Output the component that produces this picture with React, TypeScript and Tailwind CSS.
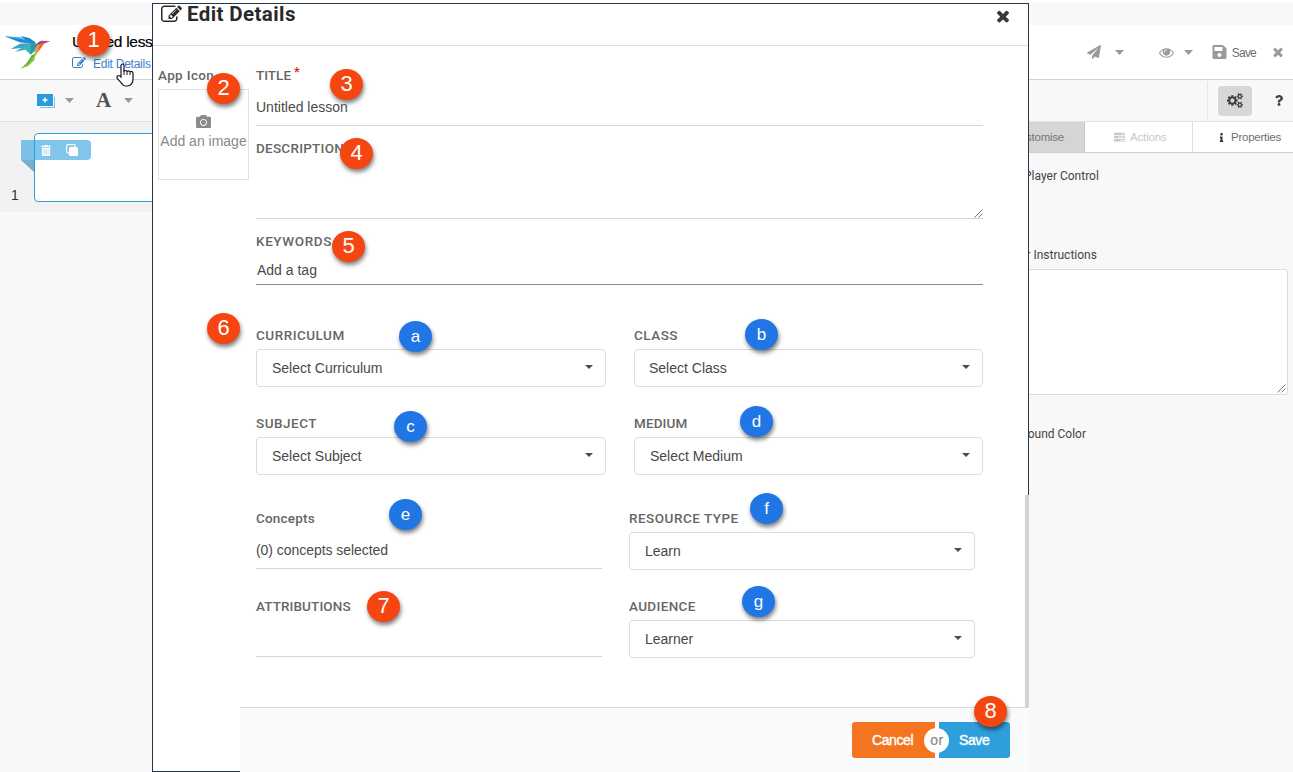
import React from "react";
import { FaCamera, FaInfo, FaQuestion, FaSave, FaTrashAlt } from "react-icons/fa";

const PATHS = {
  edit: "M888 1184l116-116-152-152-116 116v56h96v96h56zm440-720q-16-16-33 1l-350 350q-17 17-1 33t33-1l350-350q17-17 1-33zm80 594v190q0 119-84.5 203.5t-203.5 84.5h-832q-119 0-203.5-84.5t-84.5-203.5v-832q0-119 84.5-203.5t203.5-84.5h832q63 0 117 25 15 7 18 23 3 17-9 29l-49 49q-14 14-32 8-23-6-45-6h-832q-66 0-113 47t-47 113v832q0 66 47 113t113 47h832q66 0 113-47t47-113v-126q0-13 9-22l64-64q15-15 35-7t20 29zm-96-738l288 288-672 672h-288v-288zm444 132l-92 92-288-288 92-92q28-28 68-28t68 28l152 152q28 28 28 68t-28 68z",
  close: "M1490 1322q0 40-28 68l-136 136q-28 28-68 28t-68-28l-294-294-294 294q-28 28-68 28t-68-28l-136-136q-28-28-28-68t28-68l294-294-294-294q-28-28-28-68t28-68l136-136q28-28 68-28t68 28l294 294 294-294q28-28 68-28t68 28l136 136q28 28 28 68t-28 68l-294 294 294 294q28 28 28 68z",
  eye: "M1664 960q-152-236-381-353 61 104 61 225 0 185-131.5 316.5t-316.5 131.5-316.5-131.5-131.5-316.5q0-121 61-225-229 117-381 353 133 205 333.5 326.5t434.5 121.5 434.5-121.5 333.5-326.5zm-720-384q0-20-14-34t-34-14q-125 0-214.5 89.5t-89.5 214.5q0 20 14 34t34 14 34-14 14-34q0-86 61-147t147-61q20 0 34-14t14-34zm848 384q0 34-20 69-140 230-376.5 368.5t-499.5 138.5-499.5-139-376.5-368q-20-35-20-69t20-69q140-229 376.5-368t499.5-139 499.5 139 376.5 368q20 35 20 69z",
  plane: "M1764 11q33 24 27 64l-256 1536q-5 29-32 45-14 8-31 8-11 0-24-5l-453-185-242 295q-18 23-49 23-13 0-22-4-19-7-30.5-23.5t-11.5-36.5v-349l864-1059-1069 925-395-162q-37-14-40-55-2-40 32-59l1664-960q15-9 32-9 20 0 36 11z",
  tasks: "M1024 1408h640v-128h-640v128zm-384-512h1024v-128h-1024v128zm640-512h384v-128h-384v128zm512 832v256q0 26-19 45t-45 19h-1664q-26 0-45-19t-19-45v-256q0-26 19-45t45-19h1664q26 0 45 19t19 45zm0-512v256q0 26-19 45t-45 19h-1664q-26 0-45-19t-19-45v-256q0-26 19-45t45-19h1664q26 0 45 19t19 45zm0-512v256q0 26-19 45t-45 19h-1664q-26 0-45-19t-19-45v-256q0-26 19-45t45-19h1664q26 0 45 19t19 45z",
};

const BIG_GEAR =
  "M896 896q0-106-75-181t-181-75-181 75-75 181 75 181 181 75 181-75 75-181zM1280 805v185q0 10-7 19.5t-16 10.5l-155 24q-11 35-32 76 34 48 90 115 7 11 7 20 0 12-7 19-23 30-82.5 89.5t-78.5 59.5q-11 0-21-7l-115-90q-37 19-77 31-11 108-23 155-7 24-30 24h-186q-11 0-20-7.5t-10-17.5l-23-153q-34-10-75-31l-118 89q-7 7-20 7-11 0-21-8-144-133-144-160 0-9 7-19 10-14 41-53t47-61q-23-44-35-82l-152-24q-10-1-17-9.5t-7-19.5v-185q0-10 7-19.5t16-10.5l155-24q11-35 32-76-34-48-90-115-7-11-7-20 0-12 7-20 22-30 82-89t79-59q11 0 21 7l115 90q34-18 77-32 11-108 23-154 7-24 30-24h186q11 0 20 7.5t10 17.5l23 153q34 10 75 31l118-89q8-7 20-7 11 0 21 8 144 133 144 160 0 8-7 19-12 16-42 54t-45 60q23 48 34 82l152 23q10 2 17 10.5t7 19.5z";
const SMALL_GEAR =
  "M1664 1408q0-52-38-90t-90-38-90 38-38 90q0 53 37.5 90.5t90.5 37.5 90.5-37.5 37.5-90.5zM1920 1338v140q0 16-149 31-12 27-30 52 51 113 51 138 0 4-4 7-122 71-124 71-8 0-46-47t-52-68q-20 2-30 2t-30-2q-14 21-52 68t-46 47q-2 0-124-71-4-3-4-7 0-25 51-138-18-25-30-52-149-15-149-31v-140q0-16 149-31 13-29 30-52-51-113-51-138 0-4 4-7 4-2 35-20t59-34 30-16q8 0 46 46.5t52 67.5q20-2 30-2t30 2q51-71 92-112l6-2q4 0 124 70 4 3 4 7 0 25-51 138 17 23 30 52 149 15 149 31z";

function Icon({ name, className }: { name: keyof typeof PATHS; className: string }) {
  return (
    <svg viewBox="0 0 1792 1792" fill="currentColor" className={`shrink-0 ${className}`}>
      <path d={PATHS[name]} />
    </svg>
  );
}

function Gears() {
  return (
    <svg viewBox="0 0 1920 1792" fill="currentColor" fillRule="evenodd" className="h-[15px] w-[16px]">
      <path d={BIG_GEAR} />
      <path d={SMALL_GEAR} />
      <path d={SMALL_GEAR} transform="translate(0 -1024)" />
    </svg>
  );
}

function Caret({ className }: { className: string }) {
  return (
    <svg viewBox="0 0 10 5" preserveAspectRatio="none" fill="currentColor" className={`shrink-0 ${className}`}>
      <path d="M0 0h10L5 5z" />
    </svg>
  );
}

function Grip() {
  return (
    <svg viewBox="0 0 9 9" fill="none" stroke="#666" strokeWidth="0.9" className="h-[9px] w-[9px]">
      <path d="M0.5 8.5l8-8M4.5 8.5l4-4" />
    </svg>
  );
}

function Label({ children, className = "" }: { children: React.ReactNode; className?: string }) {
  return (
    <div className={`flex h-[18px] items-center whitespace-nowrap pt-px font-[Roboto,sans-serif] text-[13.5px] font-medium text-[#666] ${className}`}>
      {children}
    </div>
  );
}

function Select({ value, className = "" }: { value: string; className?: string }) {
  return (
    <div className={`flex h-[38px] items-center justify-between rounded-[4px] border border-[#dcdcdc] pr-[12px] text-[14px] text-[#484848] ${className}`}>
      <span>{value}</span>
      <Caret className="mb-[2px] h-[4px] w-[8px] text-[#4c4c4c]" />
    </div>
  );
}

function Logo() {
  return (
    <svg viewBox="12 27 144 108" className="h-[36px] w-[48px]">
      <path d="M62 33L88 39 106 52 108 60 84 54z" fill="#1f86cf" />
      <path d="M14 34L62 37 92 55 60 52z" fill="#3fb0ea" />
      <path d="M14 34L60 52 92 55 74 45z" fill="#2688cf" />
      <path d="M32 72L60 56 92 54 74 68z" fill="#37a6c8" />
      <path d="M46 80L74 62 92 54 110 58 106 78 92 89 76 74z" fill="#3db2b9" />
      <path d="M92 54L112 58 92 89z" fill="#2d97a8" />
      <path d="M106 64Q112 50 126 47L122 57 108 68z" fill="#3b4a9e" />
      <path d="M124 47L151 48 132 56 116 57z" fill="#b8487c" />
      <path d="M110 60L133 55 118 76 104 92z" fill="#e8642f" />
      <path d="M110 60L120 58 108 92 104 92z" fill="#f09a38" />
      <path d="M107 84L103 106 84 124 61 131Q84 114 94 92z" fill="#93c83e" />
      <path d="M94 92L106 86 88 114 61 131Q84 114 94 92z" fill="#56b848" />
    </svg>
  );
}

function Hand() {
  return (
    <svg viewBox="0 0 18 24" className="h-[24px] w-[18px]">
      <path
        d="M5 14V2.5Q5 1 6.5 1T8 2.5V9q0-1.5 1.5-1.5T11 9q0-1.2 1.4-1.2T14 9.4q0-1 1.3-1T17 10v6q0 6-5.5 7H9.5Q7 23 5 19.5L1.3 15.5Q.5 14 1.600 13T4 13z"
        fill="#fff"
        stroke="#111827"
        strokeWidth="1.2"
      />
      <path d="M8 8.500V12M11 9v3M14 9.500V12" stroke="#111827" strokeWidth="1" />
    </svg>
  );
}

const BADGES: { text: string; cx: number; cy: number }[] = [
  { text: "1", cx: 93.5, cy: 40 },
  { text: "2", cx: 223.5, cy: 88 },
  { text: "3", cx: 346.5, cy: 84 },
  { text: "4", cx: 356.5, cy: 153 },
  { text: "5", cx: 348.5, cy: 246 },
  { text: "6", cx: 223.5, cy: 328 },
  { text: "7", cx: 383.5, cy: 606 },
  { text: "8", cx: 990.5, cy: 711 },
  { text: "a", cx: 415.5, cy: 336 },
  { text: "b", cx: 761.5, cy: 334 },
  { text: "c", cx: 410.5, cy: 426 },
  { text: "d", cx: 756.5, cy: 421 },
  { text: "e", cx: 405.5, cy: 514 },
  { text: "f", cx: 766.5, cy: 508 },
  { text: "g", cx: 758.5, cy: 601 },
];

function Badge({ text, cx, cy }: { text: string; cx: number; cy: number }) {
  const tone = /\d/.test(text) ? "bg-[#f54611] text-[22px]" : "bg-[#2176e6] text-[17px]";
  return (
    <div
      className={`absolute flex h-[31px] w-[33px] items-center justify-center rounded-[50%] leading-none text-white shadow-[1px_3px_4px_rgba(0,0,0,0.5)] ${tone}`}
      style={{ left: cx - 16.5, top: cy - 15.5 }}
    >
      {text}
    </div>
  );
}

function Editor() {
  return (
    <div className="flex h-[772px] flex-col bg-[#f8f8f8]">
      <div className="h-[3px] bg-white" />
      <div className="h-[22px]" />
      <header className="flex h-[55px] justify-between border-b border-[#d2d2d2] bg-white">
        <div className="flex pl-[4px]">
          <div className="pt-[9px]"><Logo /></div>
          <div className="ml-[20px] pt-[8px]">
            <div className="h-[19px] text-[15.5px] leading-[18px] tracking-[-0.3px] whitespace-nowrap text-black [-webkit-text-stroke:0.2px_black]">Untitled lesson</div>
            <div className="mt-[2px] flex h-[18px] items-center text-[12px] text-[#3a7fc8]">
              <Icon name="edit" className="h-[14px] w-[14px]" />
              <span className="ml-[7px] pt-px tracking-[-0.25px]">Edit Details</span>
            </div>
          </div>
        </div>
        <div className="flex items-center text-[#9a9a9a]">
          <Icon name="plane" className="h-[14px] w-[14px]" />
          <Caret className="ml-[14px] h-[5px] w-[9px]" />
          <Icon name="eye" className="ml-[35px] h-[15px] w-[15px]" />
          <Caret className="ml-[10px] h-[5px] w-[9px]" />
          <FaSave className="ml-[19px] h-[16px] w-[15px]" />
          <span className="ml-[5px] pt-[2px] text-[12px] tracking-[-0.8px] text-[#707070]">Save</span>
          <Icon name="close" className="mr-[8px] ml-[15px] h-[14px] w-[14px]" />
        </div>
      </header>
      <div className="flex h-[42px] justify-between border-b border-[#e2e2e2]">
        <div className="flex items-center pl-[37px]">
          <svg viewBox="0 0 18 14" className="h-[14px] w-[18px]">
            <path d="M3 3h15v11H3z" fill="#7cc2ea" />
            <path d="M0 0h16v12H0z" fill="#2a9bdc" />
            <path d="M16.500 1v11.500H2" fill="none" stroke="#f8f8f8" />
            <path d="M8 3.500v5M5.500 6h5" stroke="#fff" strokeWidth="1.500" />
          </svg>
          <Caret className="ml-[10px] h-[5px] w-[9px] text-[#999]" />
          <span className="ml-[22px] font-['Liberation_Serif',serif] text-[21px] font-bold text-[#505050]">A</span>
          <Caret className="ml-[13px] h-[5px] w-[9px] text-[#999]" />
        </div>
        <div className="flex w-[86px] items-center rounded-[4px] border-l border-[#e8e8e8] pl-[10px] text-[#404040]">
          <div className="flex h-[30px] w-[34px] items-center justify-center rounded-[4px] bg-[#d7d7d7]">
            <Gears />
          </div>
          <FaQuestion className="ml-[22px] h-[11px] w-[10px]" />
        </div>
      </div>
      <div className="flex flex-1 justify-between">
        <div className="h-[90px] w-[300px] bg-[#f2f2f2] pt-[11px]">
          <div className="flex">
            <div className="flex w-[34px] items-end justify-center pr-[4px] text-[14px] text-[#333]"><span className="-mb-[4px]">1</span></div>
            <div className="relative h-[69px] w-[122px] rounded-[4px] border border-[#2f9fdc] bg-white">
              <div className="absolute top-[6px] -left-[14px] flex h-[20px] w-[70px] items-center rounded-r-[4px] bg-[#2f9fdc]/60 pl-[20px] text-white">
                <FaTrashAlt className="h-[11px] w-[10px]" />
                <svg viewBox="0 0 12 12" className="ml-[15px] h-[12px] w-[12px]">
                  <rect x="0.600" y="0.600" width="8.500" height="8.500" rx="1.500" fill="none" stroke="#fff" strokeWidth="1.200" />
                  <rect x="3" y="3" width="9" height="9" rx="1.500" fill="#fff" />
                </svg>
              </div>
              <svg viewBox="0 0 13 12" className="absolute top-[26px] -left-[14px] h-[12px] w-[13px]">
                <path d="M0 0h13v12z" fill="#77adcd" />
              </svg>
            </div>
          </div>
        </div>
        <div className="w-[317px] font-[Roboto,sans-serif] text-[12px] text-[#444]">
          <div className="flex h-[31px] border-b border-[#cfcfcf] bg-white font-['Liberation_Sans',sans-serif] text-[11.5px] tracking-[-0.25px]">
            <div className="flex w-[109px] items-center justify-end border-r border-[#c8c8c8] bg-[#d5d5d5] pt-px pr-[20px] text-[#777]">Customise</div>
            <div className="flex w-[108px] items-center border-r border-[#dedede] pt-px pl-[29px] text-[#c8c8c8]">
              <Icon name="tasks" className="mr-[5px] h-[11px] w-[11px]" />
              <span className="tracking-[-0.15px]">Actions</span>
            </div>
            <div className="flex flex-1 items-center pt-px pl-[25px] text-[#707070]">
              <FaInfo className="mr-[6px] mb-px h-[9px] w-[7px] text-[#333]" />
              Properties
            </div>
          </div>
          <div className="flex h-[46px] items-center pl-[48px]">Player Control</div>
          <div className="flex h-[70px] items-end pb-[7px] pl-[44px] text-[12px] leading-[14px]">
            <span>er Instructions</span>
          </div>
          <div className="mr-[5px] flex h-[126px] items-end justify-end rounded-[3px] border border-[#dcdcdc] bg-white p-px"><Grip /></div>
          <div className="pt-[31px] pl-[41px] leading-[16px]">ground Color</div>
        </div>
      </div>
    </div>
  );
}

function Dialog() {
  return (
    <div className="absolute top-[3px] left-[152px] flex h-[769px] w-[877px] flex-col border border-[#26364d] bg-white">
      <div className="flex h-[42px] shrink-0 justify-between border-b border-[#dcdcdc] pr-[16px] pl-[8px] text-[#292929]">
        <div className="flex h-[21px] items-center">
          <Icon name="edit" className="h-[21px] w-[21px]" />
          <span className="ml-[5px] font-[Roboto,sans-serif] text-[20.5px] font-bold tracking-[0.4px] whitespace-nowrap">Edit Details</span>
        </div>
        <Icon name="close" className="mt-[3px] h-[18px] w-[18px] text-[#3a3a3a]" />
      </div>
      <div className="flex flex-1 pl-[5px]">
        <div className="w-[91px] pt-[20px]">
          <Label className="tracking-[0.35px]">App Icon</Label>
          <div className="mt-[5px] flex h-[91px] flex-col items-center border border-[#e2e2e2] pt-[24px] text-[#8a8a8a]">
            <FaCamera className="h-[15px] w-[15px]" />
            <span className="mt-[2px] text-[14px] leading-[20px] whitespace-nowrap">Add an image</span>
          </div>
        </div>
        <div className="ml-[7px] w-[727px] text-[14px] text-[#4a4a4a]">
          <div className="h-[80px] border-b border-[#d6d6d6] pt-[20px]">
            <Label>TITLE<span className="mb-[8px] ml-[3px] text-[13px] text-[#e02020]">*</span></Label>
            <div className="pt-[13px] leading-[20px]">Untitled lesson</div>
          </div>
          <div className="flex h-[93px] flex-col justify-between border-b border-[#d6d6d6] pt-[13px]">
            <Label className="tracking-[0.25px]">DESCRIPTION</Label>
            <div className="flex justify-end"><Grip /></div>
          </div>
          <div className="h-[66px] border-b border-[#8e8e8e] pt-[13px]">
            <Label className="tracking-[0.6px]">KEYWORDS</Label>
            <div className="pt-[10px] pl-px leading-[20px]">Add a tag</div>
          </div>
          <div className="grid grid-cols-[350px_349px] gap-x-[28px] pt-[41px]">
            <div>
              <Label className="tracking-[0.5px]">CURRICULUM</Label>
              <Select value="Select Curriculum" className="mt-[5px] pl-[15px]" />
            </div>
            <div>
              <Label className="tracking-[0.5px]">CLASS</Label>
              <Select value="Select Class" className="mt-[5px] pl-[14px]" />
            </div>
            <div className="pt-[27px]">
              <Label className="tracking-[0.5px]">SUBJECT</Label>
              <Select value="Select Subject" className="mt-[5px] pl-[15px]" />
            </div>
            <div className="pt-[27px]">
              <Label className="tracking-[0.1px]">MEDIUM</Label>
              <Select value="Select Medium" className="mt-[5px] pl-[15px]" />
            </div>
          </div>
          <div className="grid grid-cols-[346px_346px] gap-x-[27px] pt-[34px]">
            <div className="h-[60px] border-b border-[#d6d6d6]">
              <Label className="tracking-[0.2px]">Concepts</Label>
              <div className="pt-[13px] leading-[20px] tracking-[-0.05px]">(0) concepts selected</div>
            </div>
            <div>
              <Label className="tracking-[0.5px]">RESOURCE TYPE</Label>
              <Select value="Learn" className="mt-[5px] pl-[15px]" />
            </div>
            <div className="h-[87px] border-b border-[#d6d6d6] pt-[27px]">
              <Label className="tracking-[0.1px]">ATTRIBUTIONS</Label>
            </div>
            <div className="pt-[27px]">
              <Label className="tracking-[0.35px]">AUDIENCE</Label>
              <Select value="Learner" className="mt-[5px] pl-[15px]" />
            </div>
          </div>
        </div>
      </div>
      <div className="absolute top-[491px] -right-px h-[213px] w-[4px] bg-[#d4d4d4]" />
      <div className="-mr-px -mb-px ml-[87px] flex h-[65px] shrink-0 justify-end border-t border-[#d5d9de] bg-[#f8fafc] pt-[14px] pr-[19px]">
        <div className="relative flex h-[36px] gap-[4px] bg-white text-[14px] tracking-[-0.4px] text-white [-webkit-text-stroke:0.4px_white]">
          <div className="flex w-[83px] items-center rounded-l-[3px] bg-[#f4741f] pl-[20px]">Cancel</div>
          <div className="flex w-[71px] items-center rounded-r-[3px] bg-[#2f9fdb] pl-[20px]">Save</div>
          <div className="absolute top-[6px] left-[72px] flex h-[25px] w-[25px] items-center justify-center rounded-full bg-white pl-px text-[14px] tracking-[0.5px] text-[#888] [-webkit-text-stroke:0.2px_#888]">or</div>
        </div>
      </div>
    </div>
  );
}

export default function App() {
  return (
    <div className="relative h-[772px] w-[1293px] overflow-hidden font-['Liberation_Sans',Arial,sans-serif]">
      <Editor />
      <Dialog />
      {BADGES.map((badge) => (
        <Badge key={badge.text} {...badge} />
      ))}
      <div className="absolute top-[63px] left-[116px]"><Hand /></div>
    </div>
  );
}
